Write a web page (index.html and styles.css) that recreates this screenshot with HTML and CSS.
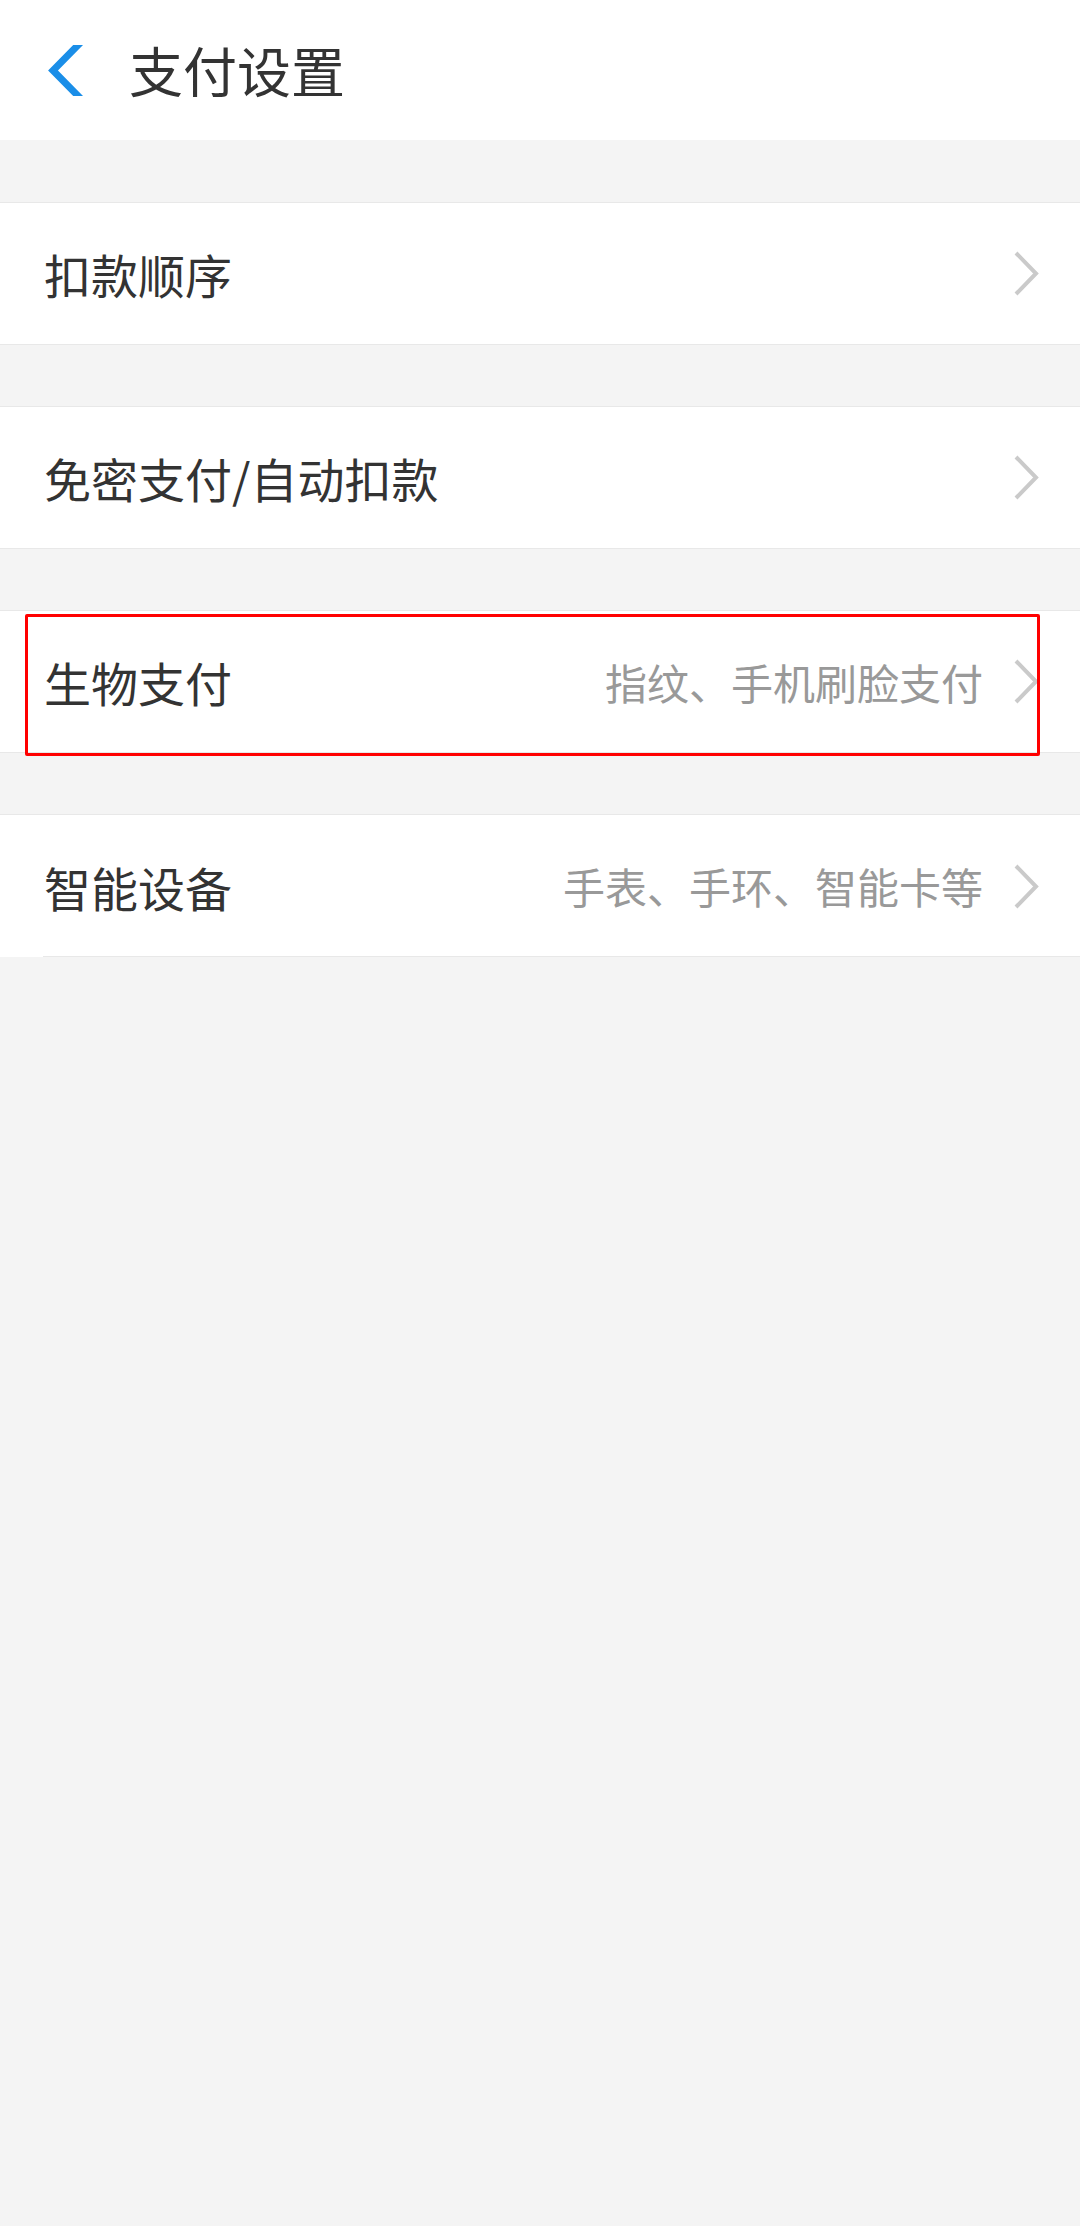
FILE: index.html
```html
<!DOCTYPE html>
<html lang="zh-CN">
<head>
<meta charset="utf-8">
<title>支付设置</title>
<link rel="stylesheet" href="styles.css">
</head>
<body>
<header class="topbar">
  <svg class="back" width="42" height="51" viewBox="0 0 42 51" aria-hidden="true">
    <polyline points="40,-6 9,25.5 40,57" fill="none" stroke="#1a8ee8" stroke-width="7" stroke-linecap="butt" stroke-linejoin="miter"/>
  </svg>
  <h1 class="title">支付设置</h1>
</header>
<main class="list">
  <div class="row">
    <span class="label">扣款顺序</span>
    <svg class="arrow" width="27" height="45" viewBox="0 0 27 45" aria-hidden="true"><polyline points="3,2 23,22.5 3,43" fill="none" stroke="#cacaca" stroke-width="4"/></svg>
  </div>
  <div class="row">
    <span class="label">免密支付/自动扣款</span>
    <svg class="arrow" width="27" height="45" viewBox="0 0 27 45" aria-hidden="true"><polyline points="3,2 23,22.5 3,43" fill="none" stroke="#cacaca" stroke-width="4"/></svg>
  </div>
  <div class="row highlighted">
    <span class="label">生物支付</span>
    <span class="sub">指纹、手机刷脸支付</span>
    <svg class="arrow" width="27" height="45" viewBox="0 0 27 45" aria-hidden="true"><polyline points="3,2 23,22.5 3,43" fill="none" stroke="#cacaca" stroke-width="4"/></svg>
    <div class="mark"></div>
  </div>
  <div class="row last">
    <span class="label">智能设备</span>
    <span class="sub">手表、手环、智能卡等</span>
    <svg class="arrow" width="27" height="45" viewBox="0 0 27 45" aria-hidden="true"><polyline points="3,2 23,22.5 3,43" fill="none" stroke="#cacaca" stroke-width="4"/></svg>
  </div>
</main>
</body>
</html>
```
FILE: styles.css
```css
html, body {
  margin: 0;
  padding: 0;
}
body {
  width: 1080px;
  min-height: 2226px;
  background: #f4f4f4;
  font-family: "Noto Sans CJK SC", "Noto Sans", sans-serif;
  color: #333333;
}
.topbar {
  height: 140px;
  background: #ffffff;
  display: flex;
  align-items: center;
  padding-left: 44px;
  box-sizing: border-box;
}
.back {
  display: block;
}
.title {
  margin: 0 0 0 43px;
  font-size: 54px;
  font-weight: 400;
  line-height: 1;
  color: #333333;
}
.list {
  display: flex;
  flex-direction: column;
  gap: 61px;
  padding-top: 62px;
}
.row {
  position: relative;
  height: 143px;
  box-sizing: border-box;
  background: #ffffff;
  border-top: 1px solid #e8e8e8;
  border-bottom: 1px solid #e8e8e8;
  display: flex;
  align-items: center;
  padding: 0 40px 0 44px;
}
.label {
  flex: 1;
  font-size: 47px;
  line-height: 1;
  color: #333333;
}
.sub {
  font-size: 42px;
  line-height: 1;
  color: #999999;
  margin-right: 30px;
}
.arrow {
  display: block;
}
.row.last {
  border-bottom: none;
}
.row.last::after {
  content: "";
  position: absolute;
  left: 43px;
  right: 0;
  bottom: 0;
  height: 1px;
  background: #e8e8e8;
}
.mark {
  position: absolute;
  left: 25px;
  top: 3px;
  width: 1015px;
  height: 142px;
  box-sizing: border-box;
  border: 3.5px solid #ff0000;
  border-radius: 2px;
}
```
